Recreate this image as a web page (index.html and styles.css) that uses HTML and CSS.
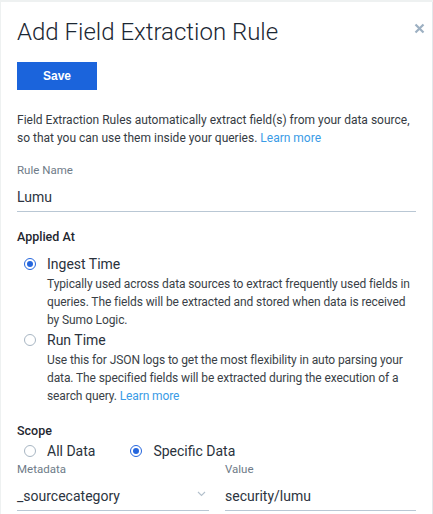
FILE: index.html
```html
<!DOCTYPE html>
<html>
<head>
<meta charset="utf-8">
<link rel="stylesheet" href="styles.css">
</head>
<body>
<div class="panel">
  <div class="header">
    <h1 class="title">Add Field Extraction Rule</h1>
    <button class="close" aria-label="Close">
      <svg width="11" height="11" viewBox="0 0 11 11"><path d="M1.5 1.5L9.5 9.5M9.5 1.5L1.5 9.5" stroke="#9db0c2" stroke-width="2.2" stroke-linecap="butt"/></svg>
    </button>
  </div>
  <button class="save">Save</button>
  <p class="intro">Field Extraction Rules automatically extract field(s) from your data source, so that you can use them inside your queries. <a class="link" href="#">Learn more</a></p>

  <div class="label">Rule Name</div>
  <div class="input">Lumu</div>

  <div class="section">Applied At</div>
  <div class="radio-row first">
    <span class="radio checked"></span><span class="radio-label">Ingest Time</span>
  </div>
  <p class="desc">Typically used across data sources to extract frequently used fields in queries. The fields will be extracted and stored when data is received by Sumo Logic.</p>
  <div class="radio-row">
    <span class="radio"></span><span class="radio-label">Run Time</span>
  </div>
  <p class="desc">Use this for JSON logs to get the most flexibility in auto parsing your data. The specified fields will be extracted during the execution of a search query. <a class="link" href="#">Learn more</a></p>

  <div class="section scope">Scope</div>
  <div class="scope-row">
    <div class="radio-row"><span class="radio"></span><span class="radio-label">All Data</span></div>
    <div class="radio-row"><span class="radio checked"></span><span class="radio-label">Specific Data</span></div>
  </div>
  <div class="fields">
    <div class="field">
      <div class="label">Metadata</div>
      <div class="input select">_sourcecategory
        <svg class="chev" width="9" height="6" viewBox="0 0 9 6"><path d="M1 1l3.5 3.5L8 1" fill="none" stroke="#b3c0cc" stroke-width="1.1"/></svg>
      </div>
    </div>
    <div class="field">
      <div class="label">Value</div>
      <div class="input">security/lumu</div>
    </div>
  </div>
</div>
</body>
</html>
```
FILE: styles.css
```css
html, body {
  margin: 0;
  padding: 0;
  background: #eef1f1;
}
body {
  padding-top: 2px;
  padding-left: 1px;
  font-family: Roboto, "Liberation Sans", sans-serif;
  color: #333a44;
}
.panel {
  background: #fff;
  height: 512px;
  padding: 0 16px 0 16px;
  box-sizing: border-box;
  border-right: 1px solid #e3e7ea;
  overflow: hidden;
}
.header {
  display: flex;
  justify-content: space-between;
  align-items: flex-start;
  padding-top: 15px;
}
.title {
  margin: 0;
  font-size: 24px;
  line-height: 30px;
  font-weight: 300;
  color: #1b2733;
}
.close {
  border: 0;
  background: none;
  padding: 0;
  margin-top: 6px;
  margin-right: -9px;
  width: 11px;
  height: 11px;
  display: flex;
}
.save {
  display: block;
  margin-top: 15px;
  width: 80px;
  height: 28px;
  border: 0;
  background: #1b64dc;
  color: #fff;
  font-family: "Liberation Sans", Arial, sans-serif;
  font-weight: bold;
  font-size: 12px;
  padding: 0;
}
.intro {
  margin: 21px 0 0;
  font-size: 12px;
  line-height: 18px;
  color: #353b43;
}
.link {
  color: #3a9be6;
  text-decoration: none;
}
.label {
  margin-top: 16px;
  font-size: 11.5px;
  line-height: 14px;
  color: #6e7b88;
}
.input {
  line-height: 28px;
  font-size: 14px;
  color: #2c3440;
  border-bottom: 1px solid #b9c7d4;
  box-sizing: border-box;
  height: 29px;
  margin-top: 6px;
}
.section {
  margin-top: 17px;
  font-size: 12.5px;
  line-height: 16px;
  font-weight: 500;
  color: #1f2730;
}
.section.scope {
  margin-top: 18px;
}
.radio-row {
  display: flex;
  align-items: center;
  height: 20px;
  margin-top: 1px;
  padding-left: 7px;
}
.radio-row.first {
  margin-top: 9px;
}
.radio {
  width: 12px;
  height: 12px;
  border: 1.5px solid #a8b6c3;
  border-radius: 50%;
  box-sizing: border-box;
  position: relative;
  flex: none;
}
.radio.checked {
  border-color: #2566dd;
}
.radio.checked::after {
  content: "";
  position: absolute;
  left: 1.5px;
  top: 1.5px;
  width: 6px;
  height: 6px;
  border-radius: 50%;
  background: #2566dd;
}
.radio-label {
  margin-left: 11px;
  font-size: 14px;
  color: #2a323c;
}
.desc {
  margin: 1px 0 0 30px;
  font-size: 12px;
  line-height: 18px;
  letter-spacing: -0.1px;
  color: #3a3f47;
}
.scope-row {
  display: flex;
  gap: 28px;
}
.scope-row .radio-row {
  margin-top: 2px;
}
.fields {
  display: grid;
  grid-template-columns: 192px 191px;
  column-gap: 16px;
}
.fields .label {
  margin-top: 1px;
}
.select {
  position: relative;
}
.chev {
  position: absolute;
  right: 3px;
  top: 9px;
}
```
